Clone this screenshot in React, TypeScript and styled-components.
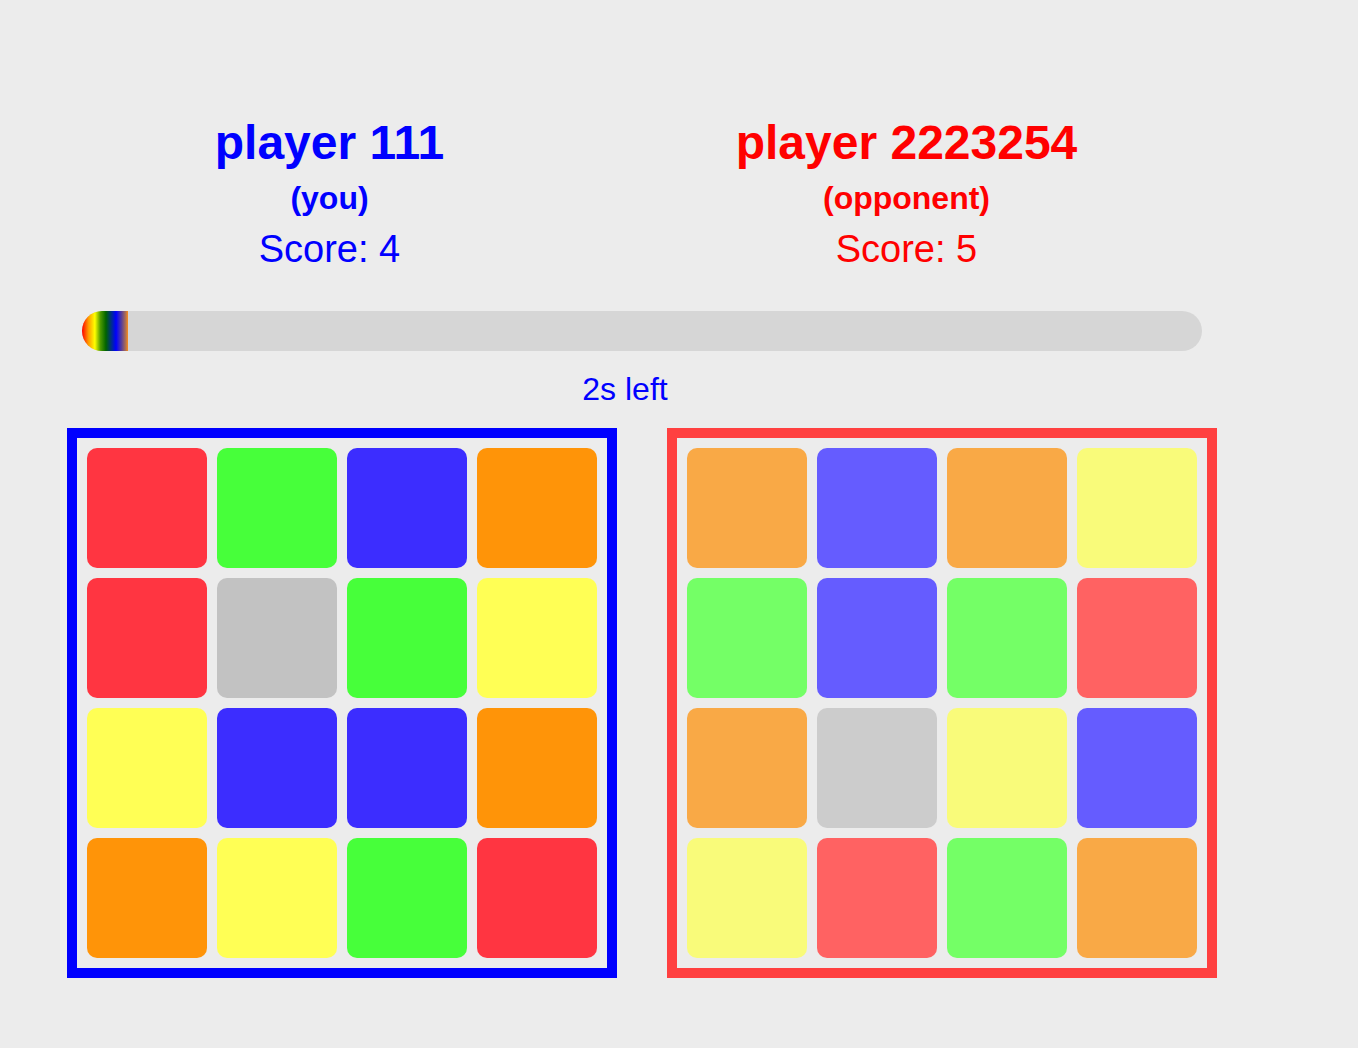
import React from "react";
import styled, { createGlobalStyle } from "styled-components";

const GlobalStyle = createGlobalStyle`
  html, body {
    margin: 0;
    padding: 0;
    background: #ececec;
    font-family: "Liberation Sans", Arial, sans-serif;
  }
`;

const Page = styled.div`
  min-height: 1048px;
  padding-top: 115px;
  box-sizing: border-box;
  background: #ececec;
`;

const Header = styled.div`
  display: grid;
  grid-template-columns: 577px 577px;
  padding-left: 41px;
`;

const PlayerBlock = styled.div<{ $color: string }>`
  display: flex;
  flex-direction: column;
  align-items: center;
  color: ${(p) => p.$color};
`;

const Name = styled.div`
  font-size: 48px;
  font-weight: bold;
  line-height: 56px;
`;

const Role = styled.div`
  font-size: 32px;
  font-weight: bold;
  line-height: 37px;
  margin-top: 9px;
`;

const Score = styled.div`
  font-size: 38px;
  line-height: 44px;
  margin-top: 10px;
`;

const Bar = styled.div`
  margin: 40px 0 0 82px;
  width: 1120px;
  height: 40px;
  border-radius: 20px;
  background: #d6d6d6;
  overflow: hidden;
  display: flex;
`;

const Fill = styled.div`
  height: 100%;
  background: linear-gradient(
    to right,
    #ff0000 0%,
    #ff9a00 14%,
    #ffff00 28%,
    #4d9a00 40%,
    #006400 52%,
    #0000ff 74%,
    #5a3f99 86%,
    #b07050 95%,
    #ff8c1a 100%
  );
`;

const Timer = styled.div`
  width: 1250px;
  margin-top: 20px;
  text-align: center;
  font-size: 32px;
  line-height: 37px;
  color: #0000ff;
`;

const Boards = styled.div`
  display: flex;
  gap: 50px;
  margin-top: 20px;
  padding-left: 67px;
`;

const Board = styled.div<{ $border: string }>`
  box-sizing: border-box;
  width: 550px;
  height: 550px;
  border: 10px solid ${(p) => p.$border};
  padding: 10px;
  display: grid;
  grid-template-columns: repeat(4, 120px);
  grid-template-rows: repeat(4, 120px);
  gap: 10px;
`;

const Cell = styled.div<{ $color: string }>`
  background: ${(p) => p.$color};
  border-radius: 10px;
`;

const mine: Record<string, string> = {
  r: "#ff3541",
  g: "#47ff3a",
  b: "#3c2dff",
  o: "#ff9408",
  y: "#ffff55",
  x: "#c2c2c2",
};

const theirs: Record<string, string> = {
  r: "#ff6262",
  g: "#74ff66",
  b: "#655cff",
  o: "#f9a946",
  y: "#f9fb7a",
  x: "#cccccc",
};

const myGrid = "rgbo rxgy ybbo oygr";
const theirGrid = "oboy gbgr oxyb yrgo";

function renderGrid(layout: string, palette: Record<string, string>) {
  return layout
    .replace(/ /g, "")
    .split("")
    .map((c, i) => <Cell key={i} $color={palette[c]} />);
}

export default function App() {
  return (
    <>
      <GlobalStyle />
      <Page>
        <Header>
          <PlayerBlock $color="#0000ff">
            <Name>player 111</Name>
            <Role>(you)</Role>
            <Score>Score: 4</Score>
          </PlayerBlock>
          <PlayerBlock $color="#ff0000">
            <Name>player 2223254</Name>
            <Role>(opponent)</Role>
            <Score>Score: 5</Score>
          </PlayerBlock>
        </Header>
        <Bar>
          <Fill style={{ width: 46 }} />
        </Bar>
        <Timer>2s left</Timer>
        <Boards>
          <Board $border="#0000ff">{renderGrid(myGrid, mine)}</Board>
          <Board $border="#ff4040">{renderGrid(theirGrid, theirs)}</Board>
        </Boards>
      </Page>
    </>
  );
}
